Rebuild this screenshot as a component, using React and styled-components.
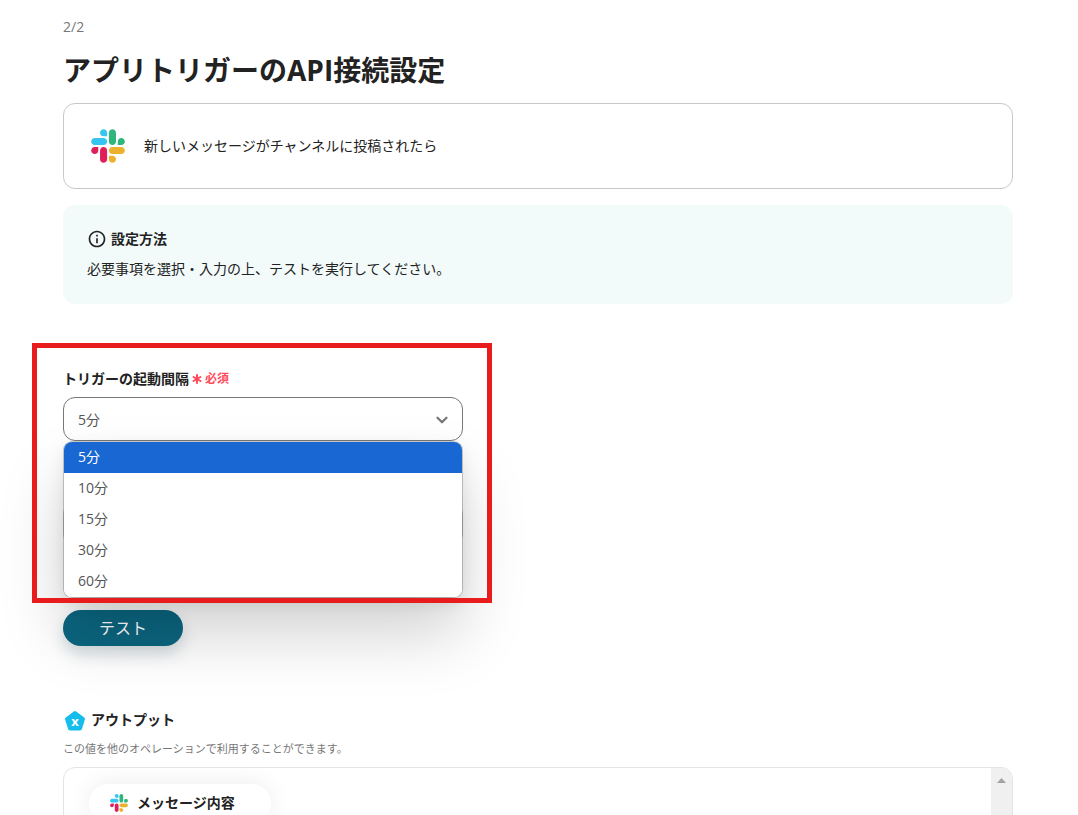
import styled, { createGlobalStyle } from 'styled-components'
import { Asterisk, ChevronDown } from 'lucide-react'
import { MdOutlineInfo } from 'react-icons/md'

const INTERVALS = ['5分', '10分', '15分', '30分', '60分'];

export default function App() {
    return (
        <Page>
            <GlobalStyle />
            <Step>2/2</Step>
            <Title>アプリトリガーのAPI接続設定</Title>

            <TriggerCard>
                <SlackLogo size={34} />
                <span>新しいメッセージがチャンネルに投稿されたら</span>
            </TriggerCard>

            <Guide>
                <GuideTitle>
                    <MdOutlineInfo size={20} />
                    設定方法
                </GuideTitle>
                <GuideText>必要事項を選択・入力の上、テストを実行してください。</GuideText>
            </Guide>

            <Form>
                <Field>
                    <Label htmlFor="interval">
                        トリガーの起動間隔
                        <Required>
                            <Asterisk size={16} strokeWidth={3} />
                            必須
                        </Required>
                    </Label>
                    <SelectWrap>
                        <Select id="interval" defaultValue="5分">
                            {INTERVALS.map((item) => <option key={item}>{item}</option>)}
                        </Select>
                        <ChevronDown size={18} strokeWidth={3} />
                        <Menu role="listbox" aria-labelledby="interval">
                            {INTERVALS.map((item, i) => (
                                <MenuItem key={item} role="option" aria-selected={i === 0} $active={i === 0}>
                                    {item}
                                </MenuItem>
                            ))}
                        </Menu>
                    </SelectWrap>
                    <Highlight />
                </Field>
                <CoveredField />
                <TestButton type="button">テスト</TestButton>
            </Form>

            <OutputTitle>
                <OutputIcon />
                アウトプット
            </OutputTitle>
            <OutputText>この値を他のオペレーションで利用することができます。</OutputText>
            <OutputPanel>
                <OutputList>
                    <Chip>
                        <SlackLogo size={18} />
                        メッセージ内容
                    </Chip>
                </OutputList>
                <ScrollTrack>
                    <ScrollUp type="button" aria-label="上へスクロール">
                        <svg width="9" height="5" viewBox="0 0 9 5">
                            <path d="M4.500 0L9 5H0z" fill="#a3a3a3" />
                        </svg>
                    </ScrollUp>
                </ScrollTrack>
            </OutputPanel>
        </Page>
    )
}

function SlackLogo({size}) {
    return (
        <svg width={size} height={size} viewBox="0 0 127 127">
            <path fill="#E01E5A" d="M27.200 80c0 7.300-5.900 13.200-13.200 13.200C6.700 93.200.8 87.300.8 80c0-7.300 5.900-13.200 13.200-13.200h13.200V80zm6.600 0c0-7.300 5.900-13.200 13.200-13.200 7.300 0 13.200 5.900 13.200 13.200v33c0 7.300-5.900 13.200-13.200 13.200-7.300 0-13.200-5.900-13.200-13.200V80z" />
            <path fill="#36C5F0" d="M47 27c-7.300 0-13.200-5.900-13.200-13.200C33.800 6.500 39.700.6 47 .6c7.300 0 13.200 5.900 13.200 13.200V27H47zm0 6.700c7.300 0 13.200 5.900 13.200 13.200 0 7.300-5.900 13.200-13.200 13.200H13.900C6.600 60.100.7 54.200.7 46.900c0-7.300 5.900-13.200 13.200-13.200H47z" />
            <path fill="#2EB67D" d="M99.900 46.900c0-7.300 5.900-13.200 13.200-13.200 7.300 0 13.200 5.900 13.200 13.200 0 7.300-5.900 13.200-13.200 13.200H99.900V46.900zm-6.600 0c0 7.300-5.900 13.200-13.200 13.200-7.300 0-13.200-5.900-13.200-13.200V13.800C66.900 6.500 72.800.6 80.100.6c7.300 0 13.200 5.900 13.200 13.200v33.100z" />
            <path fill="#ECB22E" d="M80.100 99.800c7.300 0 13.200 5.900 13.200 13.200 0 7.300-5.900 13.200-13.200 13.200-7.300 0-13.200-5.900-13.200-13.200V99.800h13.200zm0-6.600c-7.300 0-13.200-5.900-13.200-13.200 0-7.300 5.900-13.200 13.200-13.200h33.100c7.300 0 13.200 5.900 13.200 13.200 0 7.300-5.900 13.200-13.200 13.200H80.100z" />
        </svg>
    )
}

function OutputIcon() {
    return (
        <svg width="24" height="24" viewBox="0 0 24 24">
            <path d="M12 5L20 11L17 20.500H7L4 11z" fill="#14bdec" stroke="#14bdec" strokeWidth="4" strokeLinejoin="round" />
            <text x="12" y="18" textAnchor="middle" fontSize="13" fontWeight="700" fill="#fff">x</text>
        </svg>
    )
}

const GlobalStyle = createGlobalStyle`
* {
    box-sizing: border-box;
}
html {
    scrollbar-width: none;
}
body {
    margin: 0;
    background: #fff;
    color: #222;
    font-family: "Open Sans", "Noto Sans CJK JP", sans-serif;
    font-size: 14px;
    line-height: 20px;
}
button, select {
    font-family: inherit;
}
`

const Page = styled.main`
padding: 17px 65px 40px 63px;
`
const Step = styled.div`
color: #777;
`
const Title = styled.h1`
margin: 13px 0;
font-size: 28px;
font-weight: 700;
line-height: 40px;
`
const TriggerCard = styled.section`
display: flex;
align-items: center;
gap: 19px;
padding: 25px 27px;
border: 1px solid #c8c8c8;
border-radius: 12px;
`
const Guide = styled.section`
margin-top: 16px;
padding: 24px;
border-radius: 12px;
background: #f2fbfa;
`
const GuideTitle = styled.h2`
display: flex;
align-items: center;
gap: 4px;
margin: 0 0 9px;
font-size: 14px;
line-height: 20px;
`
const GuideText = styled.p`
margin: 0;
line-height: 22px;
`
const Form = styled.form`
display: flex;
flex-direction: column;
align-items: flex-start;
margin-top: 65px;
`
const Field = styled.div`
position: relative;
width: 400px;
max-width: 100%;
`
const Label = styled.label`
display: flex;
align-items: center;
margin-bottom: 8px;
font-weight: 700;
`
const Required = styled.span`
display: flex;
align-items: center;
color: #ff4a5c;
font-size: 12px;
`
const SelectWrap = styled.div`
position: relative;
svg {
    position: absolute;
    top: 14px;
    right: 12px;
    color: #777;
    pointer-events: none;
}
`
const Select = styled.select`
appearance: none;
display: block;
width: 100%;
height: 44px;
padding: 0 14px;
border: 1px solid #777;
border-radius: 12px;
background: #fff;
color: #555;
font-size: 14px;
`
const Menu = styled.ul`
position: absolute;
z-index: 1;
top: 100%;
left: 0;
right: 0;
margin: 0;
padding: 0;
overflow: hidden;
list-style: none;
border: 1px solid rgba(0, 0, 0, 0.2);
border-radius: 9px;
background: #fff;
background-clip: padding-box;
box-shadow: 0 6px 16px rgba(0, 0, 0, 0.08), 0 36px 64px rgba(0, 0, 0, 0.18);
`
const MenuItem = styled.li`
padding: 0 14px 2px;
color: ${({$active}) => $active ? '#fff' : '#555'};
background: ${({$active}) => $active ? '#1967d2' : '#fff'};
line-height: 29px;
`
// red frame drawn over the interval field and its open menu
const Highlight = styled.div`
position: absolute;
z-index: 2;
top: -26px;
left: -31px;
width: calc(100% + 60px);
height: 260px;
border: 5px solid #e81c1c;
pointer-events: none;
`
const CoveredField = styled.div`
width: 400px;
max-width: 100%;
height: 44px;
margin: 61px 0 64px;
border: 1px solid #ccc;
border-radius: 12px;
`
const TestButton = styled.button`
width: 120px;
height: 36px;
padding: 0 0 2px;
border: 0;
border-radius: 18px;
background: #0b6680;
color: #fff;
font-size: 16px;
box-shadow: 0 8px 16px rgba(11, 50, 70, 0.18);
`
const OutputTitle = styled.h2`
display: flex;
align-items: center;
gap: 4px;
margin: 62px 0 0;
font-size: 14px;
line-height: 24px;
`
const OutputText = styled.p`
margin: 7px 0 8px;
color: #777;
font-size: 11px;
line-height: 20px;
`
const OutputPanel = styled.section`
display: flex;
height: 320px;
overflow: hidden;
border: 1px solid #e4e4e4;
border-radius: 12px;
`
const OutputList = styled.div`
flex: 1;
padding: 16px 25px;
`
const Chip = styled.div`
display: inline-flex;
align-items: center;
gap: 9px;
height: 38px;
padding: 0 36px 0 21px;
border-radius: 19px;
background: #fff;
font-weight: 700;
box-shadow: 0 0 24px rgba(0, 0, 0, 0.08);
`
const ScrollTrack = styled.div`
width: 21px;
background: #f0f0f0;
`
const ScrollUp = styled.button`
display: flex;
align-items: center;
justify-content: center;
width: 100%;
height: 24px;
padding: 0;
border: 0;
background: transparent;
`
